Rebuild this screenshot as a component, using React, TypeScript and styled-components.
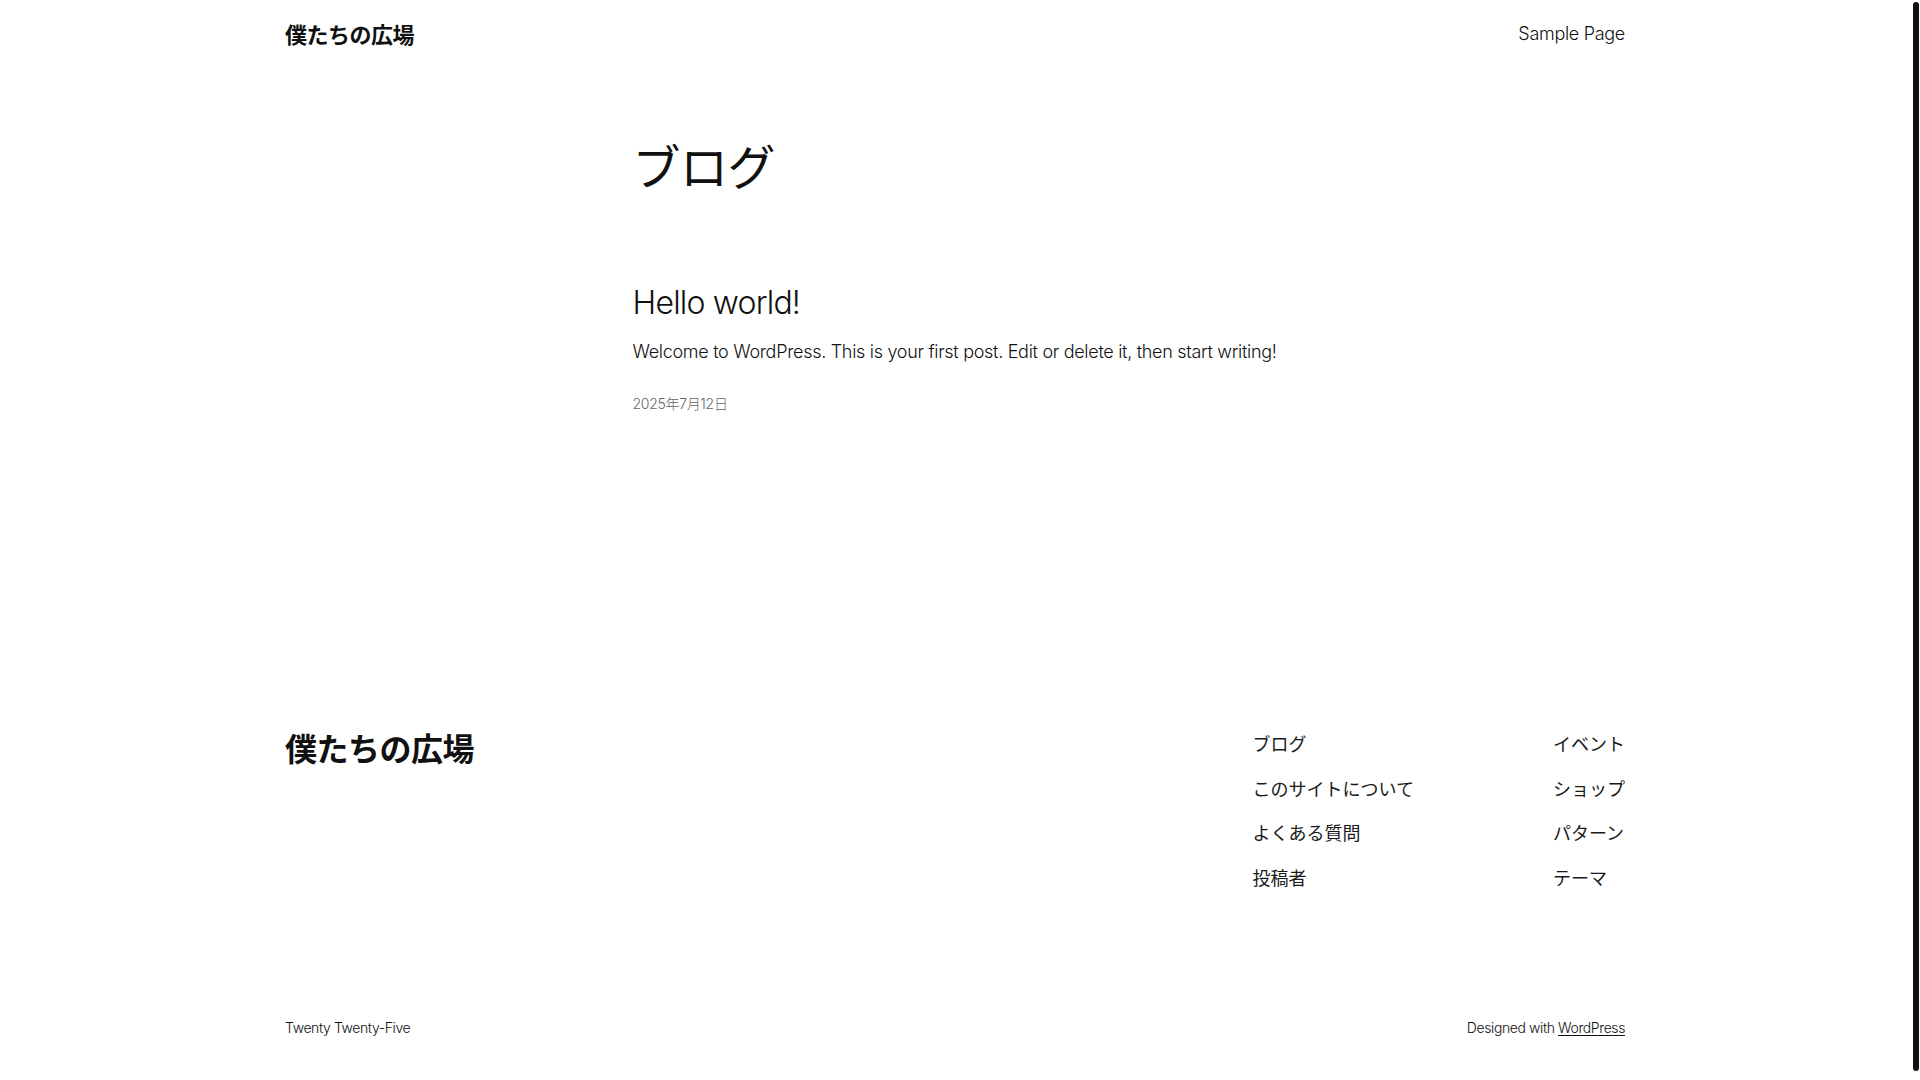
import styled, { createGlobalStyle } from "styled-components";

const GlobalStyle = createGlobalStyle`
  html, body {
    margin: 0;
    padding: 0;
    background: #ffffff;
    color: #111111;
    font-family: Inter, "Noto Sans CJK JP", sans-serif;
  }

  html {
    overflow: hidden;
  }

  a {
    color: inherit;
    text-decoration: none;
  }
`;

// the page is a little taller than the window, so the scroll thumb fills almost the whole track
const ScrollTrack = styled.div`
  position: fixed;
  top: 0;
  right: 0;
  bottom: 0;
  width: 10px;
  background: #ffffff;
`;

const ScrollThumb = styled.div`
  position: absolute;
  top: 2px;
  bottom: 9px;
  right: 1px;
  width: 6px;
  border-radius: 3px;
  background: #111111;
`;

const Page = styled.div`
  margin-right: 10px;
  padding-bottom: 50px;
`;

const Wide = styled.div`
  width: 1340px;
  margin: 0 auto;
`;

const Header = styled.header`
  height: 67px;
  display: flex;
  align-items: center;
  justify-content: space-between;
`;

const SiteTitle = styled.a<{ $size: number }>`
  font-family: "Noto Sans CJK JP", sans-serif;
  font-size: ${(p) => p.$size}px;
  font-weight: 700;
  line-height: 1.2;
  letter-spacing: -0.5px;
`;

const NavLink = styled.a`
  font-size: 18px;
  font-weight: 300;
  letter-spacing: -0.3px;
  line-height: 1.5;
`;

const Main = styled.main`
  width: 645px;
  margin: 0 auto;
`;

const PageTitle = styled.h1`
  margin: 70px 0 0;
  font-family: "Noto Sans CJK JP", sans-serif;
  font-size: 48px;
  font-weight: 400;
  line-height: 54px;
  letter-spacing: -0.5px;
`;

const Post = styled.article`
  margin-top: 93px;
`;

const PostTitle = styled.h2`
  margin: 0;
  font-size: 32px;
  font-weight: 300;
  line-height: 38px;
  letter-spacing: -0.8px;
`;

const Excerpt = styled.p`
  margin: 16px 0 0;
  font-size: 18px;
  font-weight: 300;
  line-height: 27px;
  letter-spacing: -0.3px;
`;

const PostDate = styled.time`
  display: block;
  margin-top: 28px;
  font-size: 14px;
  font-weight: 300;
  line-height: 21px;
  color: #666666;
  letter-spacing: -0.3px;
`;

const Footer = styled.footer`
  margin-top: 314px;
`;

const FooterTop = styled.div`
  display: flex;
  justify-content: space-between;
  align-items: flex-start;
`;

const FooterNav = styled.nav`
  display: flex;
  gap: 139px;
  margin-top: 2px;
`;

const NavColumn = styled.ul`
  list-style: none;
  margin: 0;
  padding: 0;
  display: flex;
  flex-direction: column;
  gap: 17.5px;
`;

const NavItem = styled.li`
  font-family: "Noto Sans CJK JP", sans-serif;
  font-size: 18px;
  font-weight: 400;
  line-height: 27px;
  color: #1a1a1a;
`;

const FooterBottom = styled.div`
  margin-top: 126px;
  display: flex;
  justify-content: space-between;
  align-items: center;
  font-size: 14px;
  font-weight: 300;
  line-height: 21px;
  letter-spacing: -0.4px;
`;

const Credit = styled.p`
  margin: 0;
`;

const CreditLink = styled.a`
  text-decoration: underline;
  text-underline-offset: 2px;
`;

const leftNav = ["ブログ", "このサイトについて", "よくある質問", "投稿者"];
const rightNav = ["イベント", "ショップ", "パターン", "テーマ"];

export default function App() {
  return (
    <>
      <GlobalStyle />
      <Page>
        <Wide>
          <Header>
            <SiteTitle $size={22} href="#">僕たちの広場</SiteTitle>
            <NavLink href="#">Sample Page</NavLink>
          </Header>
        </Wide>

        <Main>
          <PageTitle>ブログ</PageTitle>
          <Post>
            <PostTitle>Hello world!</PostTitle>
            <Excerpt>
              Welcome to WordPress. This is your first post. Edit or delete it, then start writing!
            </Excerpt>
            <PostDate>2025年7月12日</PostDate>
          </Post>
        </Main>

        <Wide>
          <Footer>
            <FooterTop>
              <SiteTitle $size={32} href="#">僕たちの広場</SiteTitle>
              <FooterNav>
                <NavColumn>
                  {leftNav.map((item) => (
                    <NavItem key={item}>{item}</NavItem>
                  ))}
                </NavColumn>
                <NavColumn>
                  {rightNav.map((item) => (
                    <NavItem key={item}>{item}</NavItem>
                  ))}
                </NavColumn>
              </FooterNav>
            </FooterTop>
            <FooterBottom>
              <Credit>Twenty Twenty-Five</Credit>
              <Credit>
                Designed with <CreditLink href="#">WordPress</CreditLink>
              </Credit>
            </FooterBottom>
          </Footer>
        </Wide>
      </Page>
      <ScrollTrack>
        <ScrollThumb />
      </ScrollTrack>
    </>
  );
}
